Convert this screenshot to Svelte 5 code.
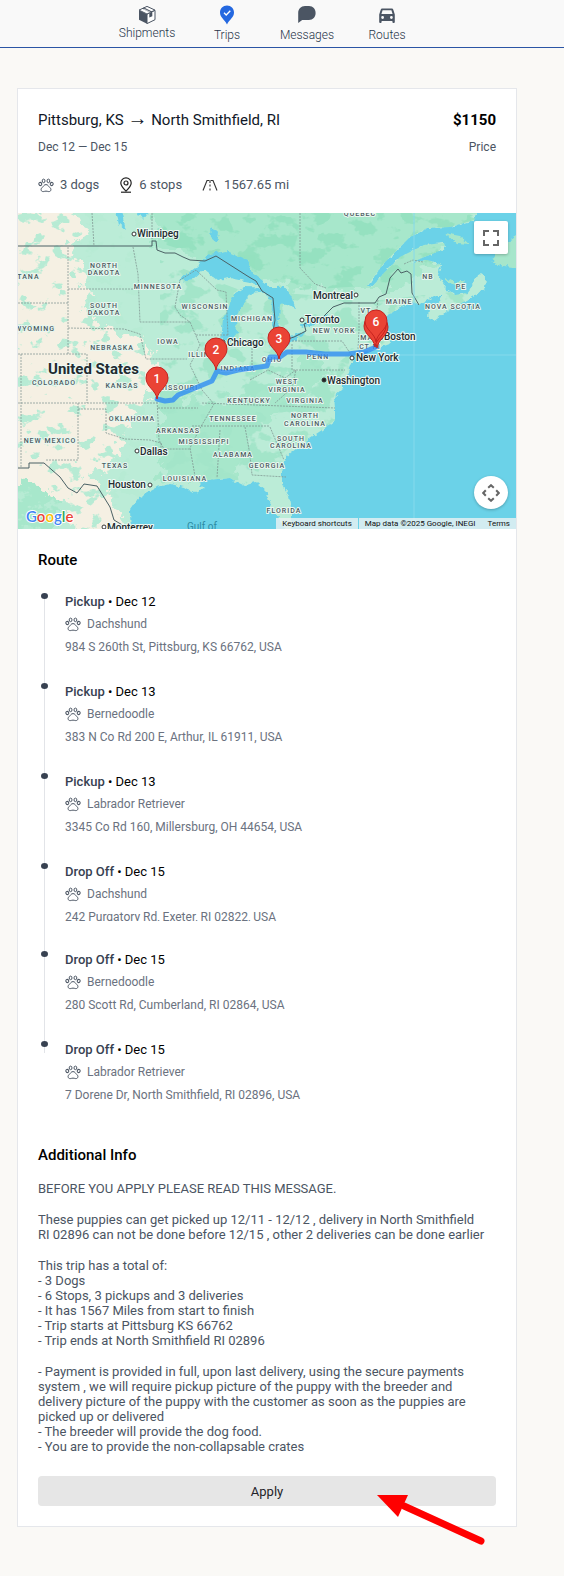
<script>
  const tabs = [
    { id: 'box', label: 'Shipments' },
    { id: 'trip', label: 'Trips' },
    { id: 'chat', label: 'Messages' },
    { id: 'car', label: 'Routes' }
  ];

  const stops = [
    { kind: 'Pickup', date: 'Dec 12', breed: 'Dachshund', address: '984 S 260th St, Pittsburg, KS 66762, USA' },
    { kind: 'Pickup', date: 'Dec 13', breed: 'Bernedoodle', address: '383 N Co Rd 200 E, Arthur, IL 61911, USA' },
    { kind: 'Pickup', date: 'Dec 13', breed: 'Labrador Retriever', address: '3345 Co Rd 160, Millersburg, OH 44654, USA' },
    { kind: 'Drop Off', date: 'Dec 15', breed: 'Dachshund', address: '242 Purgatory Rd, Exeter, RI 02822, USA', clipped: true },
    { kind: 'Drop Off', date: 'Dec 15', breed: 'Bernedoodle', address: '280 Scott Rd, Cumberland, RI 02864, USA' },
    { kind: 'Drop Off', date: 'Dec 15', breed: 'Labrador Retriever', address: '7 Dorene Dr, North Smithfield, RI 02896, USA' }
  ];

  const info = [
    ['BEFORE YOU APPLY PLEASE READ THIS MESSAGE.'],
    ['These puppies can get picked up 12/11 - 12/12 , delivery in North Smithfield', 'RI 02896 can not be done before 12/15 , other 2 deliveries can be done earlier'],
    ['This trip has a total of:', '- 3 Dogs', '- 6 Stops, 3 pickups and 3 deliveries', '- It has 1567 Miles from start to finish', '- Trip starts at Pittsburg KS 66762', '- Trip ends at North Smithfield RI 02896'],
    ['- Payment is provided in full, upon last delivery, using the secure payments system , we will require pickup picture of the puppy with the breeder and delivery picture of the puppy with the customer as soon as the puppies are picked up or delivered', '- The breeder will provide the dog food.', '- You are to provide the non-collapsable crates']
  ];

  const land = 'M10 205H484L474 220L450 227L427 228L410 237L400 247L384 263L367 286L372 287L384 273L400 257L424 245L444 243L445 249L424 257L409 264L427 260L441 265L438 275L446 288L455 295L467 293L470 289L475 277L480 274L486 278L485 289L467 300L447 311L434 321L428 318L429 310L443 297L434 297L420 305L410 301L400 308L384 317L379 327L382 332L386 335L391 343L386 345L377 348L353 357L351 366L347 377L342 390L334 397L335 408L335 420L322 430L310 438L287 456L282 470L282 483L289 497L292 513L292 535H287L279 518L270 503L266 491L257 483L244 485L230 478L217 479L206 480L199 483L204 488L194 493L184 487L170 484L157 487L139 497L130 510L131 535H10Z';

  const states = [
    ['QUEBEC', 360, 216], ['NORTH', 104, 268], ['DAKOTA', 104, 275], ['MINNESOTA', 158, 289],
    ['SOUTH', 104, 308], ['DAKOTA', 104, 315], ['WISCONSIN', 205, 309], ['MICHIGAN', 252, 321],
    ['WYOMING', 35, 331], ['MONTANA', 19, 279], ['IOWA', 168, 344], ['NEBRASKA', 112, 350],
    ['ILLINOIS', 206, 357], ['INDIANA', 238, 371], ['NB', 428, 279], ['PE', 461, 289],
    ['MAINE', 399, 304], ['NOVA SCOTIA', 453, 309], ['VT', 366, 313], ['NEW YORK', 334, 333],
    ['MASS', 372, 340], ['CT RI', 370, 349], ['PENN', 318, 359], ['OHIO', 272, 362],
    ['COLORADO', 54, 385], ['KANSAS', 122, 388], ['MISSOURI', 178, 390], ['KENTUCKY', 249, 403],
    ['OKLAHOMA', 132, 421], ['TENNESSEE', 233, 421], ['ARKANSAS', 178, 433], ['MISSISSIPPI', 204, 444],
    ['NEW MEXICO', 50, 443], ['ALABAMA', 233, 457], ['TEXAS', 115, 468], ['GEORGIA', 267, 468],
    ['LOUISIANA', 185, 481], ['WEST', 287, 384], ['VIRGINIA', 287, 392], ['VIRGINIA', 305, 403],
    ['NORTH', 305, 418], ['CAROLINA', 305, 426], ['SOUTH', 291, 441], ['CAROLINA', 291, 448],
    ['FLORIDA', 284, 513]
  ];

  const cities = [
    ['Winnipeg', 137, 237, 134, 234], ['Chicago', 227, 346, 223, 342], ['Montreal', 313, 299, 356, 295],
    ['Toronto', 305, 323, 302, 320], ['Boston', 384, 340, 381, 337], ['New York', 356, 361, 352, 358],
    ['Dallas', 140, 455, 137, 451], ['Houston', 108, 488, 150, 485], ['Monterrey', 107, 531, 104, 527],
    ['Washington', 327, 384, 324, 380]
  ];

  const pins = [
    ['', 377, 348], ['', 375, 347], ['1', 157, 399], ['2', 216, 370], ['3', 279, 359], ['6', 376, 342]
  ];
</script>

{#snippet paw()}
  <svg class="paw" viewBox="0 0 16 15" aria-hidden="true">
    <g fill="none" stroke="currentColor" stroke-width="1">
      <ellipse cx="5.6" cy="2.9" rx="1.4" ry="1.8" />
      <ellipse cx="10.4" cy="2.9" rx="1.4" ry="1.8" />
      <ellipse cx="2.3" cy="6" rx="1.4" ry="1.6" transform="rotate(-20 2.3 6)" />
      <ellipse cx="13.7" cy="6" rx="1.4" ry="1.6" transform="rotate(20 13.7 6)" />
      <path d="M8 6.6C5.9 6.6 5.7 8.3 4.2 9.5C2.2 11.1 3 13.7 5.3 13.6C6.4 13.5 7 13.1 8 13.1S9.6 13.5 10.7 13.6C13 13.7 13.8 11.1 11.8 9.5C10.3 8.3 10.1 6.6 8 6.6Z" />
    </g>
  </svg>
{/snippet}

<header>
  <nav>
    {#each tabs as tab}
      <a href="#{tab.id}" class:raised={tab.id === 'box'}>
        {#if tab.id === 'box'}
          <svg viewBox="0 0 20 20"><path fill="#4b5563" d="M2 5.3L10 9.2V18.7L2 14.7Z" /><path fill="#fff" stroke="#4b5563" stroke-linejoin="round" d="M10 9.2L18 5.3V14.7L10 18.6Z" /><path fill="#fff" stroke="#4b5563" stroke-linejoin="round" d="M2 5.1L10 1.4L18 5.1L10 9Z" /><path fill="#4b5563" d="M5 3.4L7 2.5L15 6.4V11L13 12V7.5ZM12.3 8.4L15.3 7V11.2L12.3 12.6Z" /><path stroke="#fff" stroke-width=".7" fill="none" d="M6.9 4L13.4 7.2" /></svg>
        {:else if tab.id === 'trip'}
          <svg viewBox="0 0 20 20"><path fill="#2468e0" d="M10 .6C6 .6 3 3.6 3 7.6C3 12.4 7.3 14.5 10 19.4C12.7 14.5 17 12.4 17 7.6C17 3.6 14 .6 10 .6Z" /><path fill="none" stroke="#fff" stroke-width="1.3" d="M7 7.8L9.2 10L13.3 5.7" /></svg>
        {:else if tab.id === 'chat'}
          <svg viewBox="0 0 20 20"><path fill="#4b5563" d="M8 1H12C16 1 18.6 4 18.6 8S16 15 12 15H5.2L1.2 18V8C1.2 4 4 1 8 1Z" /></svg>
        {:else}
          <svg viewBox="0 0 20 20"><path fill="#4b5563" fill-rule="evenodd" d="M5.2 3.6H14.8Q16 3.6 16.3 4.8L17.8 9.6V17Q17.8 18 16.8 18H16.4Q15.4 18 15.4 17V16H4.6V17Q4.6 18 3.6 18H3.2Q2.2 18 2.2 17V9.6L3.7 4.8Q4 3.6 5.2 3.6ZM5.6 5.2L4.4 9H15.6L14.4 5.2ZM5.6 11.1A1.4 1.4 0 1 0 5.6 13.9A1.4 1.4 0 1 0 5.6 11.1ZM14.4 11.1A1.4 1.4 0 1 0 14.4 13.9A1.4 1.4 0 1 0 14.4 11.1Z" /></svg>
        {/if}
        <span>{tab.label}</span>
      </a>
    {/each}
  </nav>
</header>

<main>
  <article>
    <div class="summary">
      <div class="row">
        <h1>Pittsburg, KS <span class="to">→</span> North Smithfield, RI</h1>
        <strong>$1150</strong>
      </div>
      <div class="row sub"><span>Dec 12 — Dec 15</span><span>Price</span></div>
      <ul class="facts">
        <li>{@render paw()}3 dogs</li>
        <li>
          <svg class="pinicon" viewBox="0 0 14 16"><g fill="none" stroke="#222" stroke-width="1.2"><path d="M7 14.2C4 11.2 1.8 8.8 1.8 6A5.2 5.2 0 0 1 12.2 6C12.2 8.8 10 11.2 7 14.2Z" /><circle cx="7" cy="6" r="2" /><path d="M2 15.2H12" /></g></svg>6 stops
        </li>
        <li>
          <svg class="road" viewBox="0 0 16 14"><path fill="none" stroke="#333" stroke-width="1.1" d="M1 12.5L5 2.5H7M15 12.5L11 2.5H9M8 2V5M8 6.5V8.5M8 10.5V12.5" /></svg>1567.65 mi
        </li>
      </ul>
    </div>

    <div class="map">
      <svg class="canvas" viewBox="18 213 498 316" role="img" aria-label="Trip map">
        <defs>
          <clipPath id="land"><path d={land} /></clipPath>
          <filter id="rough" x="-5%" y="-5%" width="110%" height="110%" color-interpolation-filters="sRGB">
            <feTurbulence type="fractalNoise" baseFrequency="0.08" numOctaves="4" seed="4" />
            <feDisplacementMap in="SourceGraphic" scale="30" xChannelSelector="R" yChannelSelector="G" />
          </filter>
          <filter id="coast" x="-5%" y="-5%" width="110%" height="110%" color-interpolation-filters="sRGB">
            <feTurbulence type="fractalNoise" baseFrequency="0.2" numOctaves="2" seed="2" />
            <feDisplacementMap in="SourceGraphic" scale="6" xChannelSelector="R" yChannelSelector="G" />
          </filter>
          <filter id="mottle" x="0" y="0" width="100%" height="100%">
            <feTurbulence type="fractalNoise" baseFrequency="0.045 0.06" numOctaves="4" seed="9" />
            <feColorMatrix values="0 0 0 0 0  0 0 0 0 0  0 0 0 0 0  0 0 0 14 -7.4" result="spots" />
            <feComposite in="SourceGraphic" in2="spots" operator="in" />
          </filter>
          <filter id="patches" x="0" y="0" width="100%" height="100%">
            <feTurbulence type="fractalNoise" baseFrequency="0.06 0.08" numOctaves="4" seed="21" />
            <feColorMatrix values="0 0 0 0 0  0 0 0 0 0  0 0 0 0 0  0 0 0 16 -9.6" result="spots" />
            <feComposite in="SourceGraphic" in2="spots" operator="in" />
          </filter>
        </defs>
        <rect x="18" y="213" width="498" height="316" fill="#6bd2e8" />
        <g filter="url(#coast)">
          <path d={land} fill="#bbecd7" />
          <path fill="#a6e6cb" d="M492 263L500 247L520 234V268L505 266ZM444 233L460 236L469 244L457 243ZM444 277L452 281L465 281L460 286L449 283Z" />
        </g>
        <g clip-path="url(#land)">
          <g filter="url(#rough)">
            <path fill="#a7e7cb" d="M160 195H500L430 260L400 290L340 290L270 285L200 260L150 245ZM165 395L210 405L280 385L310 350L330 370L290 410L250 425L240 480H165L155 440ZM10 465L40 470L60 500L55 535H10Z" />
          </g>
          <g filter="url(#rough)">
            <path fill="#f5f0e3" d="M0 190L62 195L84 230L72 250L84 268L86 300L92 322L112 328L142 338L156 362L154 392L144 408L126 428L118 450L104 468L88 476L104 490L124 520L118 550H84L66 505L44 486L0 478Z" />
          </g>
          <path fill="#8ddfbb" opacity=".7" filter="url(#mottle)" d="M150 205H500L440 260L380 285L300 290L250 270L200 255L150 240Z" />
          <path fill="#a3e5c9" filter="url(#mottle)" d="M160 260L240 290L380 300L470 290V330L350 350L345 420L290 480H160Z" />
          <rect x="10" y="205" width="135" height="330" fill="#b7ebd4" filter="url(#patches)" />
        </g>
        <g fill="#6bd2e8" filter="url(#coast)">
          <path d="M178 281L195 268L210 254L226 251L247 260L252 273L266 283L272 292L250 282L230 278L217 280L204 270L194 279Z" />
          <path d="M234 294L244 287L270 288L268 292L250 294L241 307L236 320L237 333L230 342L221 339L223 320L230 304Z" />
          <path d="M262 287L284 287L291 296L296 309L286 305L280 304L279 320L277 330L272 326L273 305Z" />
          <path d="M269 347L277 340L290 337L304 331L303 335L290 344L276 350Z" />
          <path d="M300 324L310 319L328 315L326 322L306 327Z" />
          <path d="M116 211L121 211L126 230L119 224ZM136 211L150 211L143 220Z" />
          <path d="M210 228L219 232L217 243L211 238Z" />
        </g>
        <g fill="none" stroke="#7b8f8b" stroke-width="1" stroke-dasharray="2 1" opacity=".7">
          <path d="M92 213L94 246M152 213V241M68 247V354M68 289H139M18 303H68M133 247L138 274L140 322H190M68 328L124 329L140 334L146 359H187M18 354H87V403M18 403H157M78 403V460H45M78 409H106V433L125 439L150 440L161 443V455M157 399L159 440L164 449H191M158 408H198M21 354V467M190 322L200 345L190 365L202 390L214 404L199 430L190 448L195 476M196 335H228M175 307L180 315L190 322M175 307L180 280L196 270L217 290L226 292L228 335M252 345V366M202 403L335 408M192 426H270M220 430L217 478M245 427L250 455L252 475L286 477M270 427L284 460M292 344V370H345M292 341H342L352 356M359 302V330L358 350M378 300L374 335M300 213V268L315 284L326 288M404 264L413 260L423 262M250 380L268 370L285 378L296 370L292 388L275 403" />
        </g>
        <g fill="none" stroke="#4b6165" stroke-width="1">
          <path d="M18 246H152V241H156L157 250L165 253L175 253L183 257L190 260L205 261L216 256L249 277L256 281L262 291L273 298L275 320L272 338L279 342L294 337L306 331L304 324L322 318L333 307L344 303H375L379 297L386 294L390 278L398 269L401 273L407 271L411 274L412 293L419 305M18 468H29V463H44L60 477L68 488L77 493L84 484L97 486L110 507L114 520L124 526" />
        </g>
        <path d="M414 213V529M378 355H516" stroke="#86daec" stroke-width="1" />
        <g class="state">
          {#each states as [name, x, y]}<text {x} {y}>{name}</text>{/each}
        </g>
        <path fill="none" stroke="#2f8df2" stroke-opacity=".8" stroke-width="5" stroke-linejoin="round" stroke-linecap="round" d="M157 399L165 401L173 400L178 395L200 386L212 381L217 371L226 373L238 370L267 366L270 357L280 357L287 352H306L325 354H348L364 352L376 347" />
        <g class="city">
          {#each cities as [name, x, y, cx, cy]}
            <circle {cx} {cy} r="2" fill={name === 'Washington' ? '#222' : '#fff'} stroke="#333" />
            <text {x} {y}>{name}</text>
          {/each}
          <text class="nation" x="48" y="374">United States</text>
          <text class="sea" x="187" y="530">Gulf of</text>
        </g>
        {#each pins as [n, x, y]}
          <path d="M{x} {y}C{x - 1} {y - 9} {x - 11} {y - 12} {x - 11} {y - 21}A11 11 0 0 1 {x + 11} {y - 21}C{x + 11} {y - 12} {x + 1} {y - 9} {x} {y}Z" fill="#ea4335" stroke="#c5221f" stroke-width="1" />
          <text class="num" {x} y={y - 16}>{n}</text>
        {/each}
        <text class="google" x="26" y="522"><tspan fill="#4285f4">G</tspan><tspan fill="#ea4335">o</tspan><tspan fill="#fbbc04">o</tspan><tspan fill="#4285f4">g</tspan><tspan fill="#34a853">l</tspan><tspan fill="#ea4335">e</tspan></text>
      </svg>
      <button class="ctl full" aria-label="Toggle fullscreen view">
        <svg viewBox="0 0 16 16"><path fill="none" stroke="#666" stroke-width="2" d="M1 6V1H6M10 1H15V6M15 10V15H10M6 15H1V10" /></svg>
      </button>
      <button class="ctl pan" aria-label="Map camera controls">
        <svg viewBox="0 0 18 18"><path fill="none" stroke="#666" stroke-width="2" d="M6.2 3.8L9 1.2L11.8 3.8M6.2 14.2L9 16.8L11.8 14.2M3.8 6.2L1.2 9L3.8 11.8M14.2 6.2L16.8 9L14.2 11.8" /></svg>
      </button>
      <div class="credit">
        <button>Keyboard shortcuts</button><span>Map data ©2025 Google, INEGI</span><a href="#terms">Terms</a>
      </div>
    </div>

    <section class="route">
      <h2>Route</h2>
      <ol>
        {#each stops as stop}
          <li class:clipped={stop.clipped}>
            <div class="stop">
              <h3>{stop.kind} <span>• {stop.date}</span></h3>
              <p class="breed">{@render paw()}{stop.breed}</p>
              <p class="address">{stop.address}</p>
            </div>
          </li>
        {/each}
      </ol>
    </section>

    <section class="info">
      <h2>Additional Info</h2>
      {#each info as lines}
        <p>{#each lines as line, i}{#if i}<br />{/if}{line}{/each}</p>
      {/each}
      <div class="action">
        <button class="apply">Apply</button>
        <svg class="pointer" viewBox="0 0 112 54" aria-hidden="true"><path fill="#f00" d="M0 1H31L21 23Z" /><path stroke="#f00" stroke-width="7" stroke-linecap="round" d="M27 12L104 47" /></svg>
      </div>
    </section>
  </article>
</main>

<style>
  :global(body) {
    background: #faf9f6;
    font-family: Roboto, 'Liberation Sans', sans-serif;
    font-size: 13px;
    color: #4b5563;
  }
  h1, h2, h3, p, ul, ol { margin: 0; padding: 0; font-weight: 400; }
  ul, ol { list-style: none; }
  button { font: inherit; border: 0; padding: 0; cursor: pointer; }

  header { background: #f9f9f9; border-bottom: 1px solid #2b55a5; }
  nav { display: flex; justify-content: center; height: 47px; padding-right: 30px; box-sizing: border-box; }
  nav a {
    display: flex; flex-direction: column; align-items: center; gap: 3px;
    width: 80px; padding-top: 5px; box-sizing: border-box;
    color: #263449; text-decoration: none; font-size: 12px; font-weight: 300; line-height: 14px;
  }
  nav a.raised { gap: 1px; }
  nav svg { width: 20px; height: 20px; }

  main { padding: 40px 47px 49px 17px; }
  article { background: #fff; border: 1px solid #e5e7eb; }

  .summary { padding: 21px 20px 18px; }
  .row { display: flex; justify-content: space-between; line-height: 20px; color: #111827; }
  h1 { font-size: 15px; }
  .to { font-family: 'Liberation Sans', sans-serif; font-size: 20px; line-height: 16px; }
  strong { font-size: 15px; font-weight: 700; color: #000; }
  .sub { margin-top: 7px; font-size: 12px; color: #4b5563; }
  .facts { display: flex; gap: 20px; margin-top: 18px; font-size: 13px; line-height: 20px; }
  .facts li { display: flex; align-items: center; gap: 6px; }
  .paw { width: 16px; height: 15px; color: #4b5563; flex: none; }
  .pinicon { width: 14px; height: 16px; }
  .road { width: 16px; height: 14px; }

  .map { position: relative; overflow: hidden; }
  .canvas { display: block; width: 100%; }
  .canvas text { paint-order: stroke; stroke-linejoin: round; }
  .state text { font-size: 7px; font-weight: 500; letter-spacing: 1px; text-anchor: middle; fill: #4c5b61; stroke: #e8f7f0; stroke-width: 2px; }
  .city text { font-size: 10px; font-weight: 500; fill: #222b30; stroke: #eefaf5; stroke-width: 2px; }
  .city .nation { font-size: 15px; font-weight: 700; }
  .city .sea { fill: #2c8ba3; stroke: none; font-weight: 400; }
  .canvas .num { fill: #fff; font-size: 12px; font-weight: 500; text-anchor: middle; }
  .google { font-family: Lato, sans-serif; font-size: 15px; font-weight: 600; stroke: #fff; stroke-width: 2px; }
  .ctl {
    position: absolute; right: 8px; width: 34px; height: 33px;
    display: grid; place-items: center; background: #fff; box-shadow: 0 1px 3px rgba(0, 0, 0, 0.25);
  }
  .full { top: 8px; border-radius: 2px; }
  .full svg { width: 16px; }
  .pan { bottom: 20px; border-radius: 50%; }
  .pan svg { width: 18px; }
  .credit {
    position: absolute; right: 0; bottom: 0; display: flex;
    font-size: 8px; line-height: 11px; color: #111;
  }
  .credit > * { background: rgba(236, 242, 243, 0.8); padding: 0 6px; color: #111; text-decoration: none; }
  .credit button { margin-right: 1px; }

  h2 { font-size: 15px; font-weight: 500; line-height: 20px; color: #000; }
  .route { padding: 21px 20px 0; }
  .route ol { margin-top: 19px; padding-left: 6px; }
  .route li { position: relative; height: 90px; padding-left: 21px; }
  .route li::before {
    content: ''; position: absolute; left: -3px; top: 4px; width: 7px; height: 6px; border-radius: 50%; background: #374151;
  }
  .route li::after {
    content: ''; position: absolute; left: 0; top: 10px; height: 84px; width: 1px; background: #e2e4e8;
  }
  .route li:last-child::after { height: 6px; }
  .route li.clipped { height: 88px; }
  .stop { padding-top: 5px; overflow: hidden; }
  .clipped .stop { height: 57px; }
  h3 { font-size: 13px; line-height: 16px; font-weight: 500; color: #374151; }
  h3 span { color: #000; font-weight: 400; }
  .breed { display: flex; align-items: center; gap: 6px; margin-top: 6px; font-size: 12px; line-height: 17px; color: #6b7280; }
  .address { margin-top: 6px; font-size: 12px; line-height: 17px; color: #6b7280; }

  .info { padding: 18px 20px 20px; }
  .info p { margin-top: 16px; line-height: 15px; }
  .action { position: relative; margin-top: 22px; }
  .apply { display: block; width: 100%; height: 30px; border-radius: 4px; background: #e6e6e6; color: #1f2328; }
  .pointer { position: absolute; right: 7px; top: 18px; width: 112px; height: 54px; pointer-events: none; }
</style>
